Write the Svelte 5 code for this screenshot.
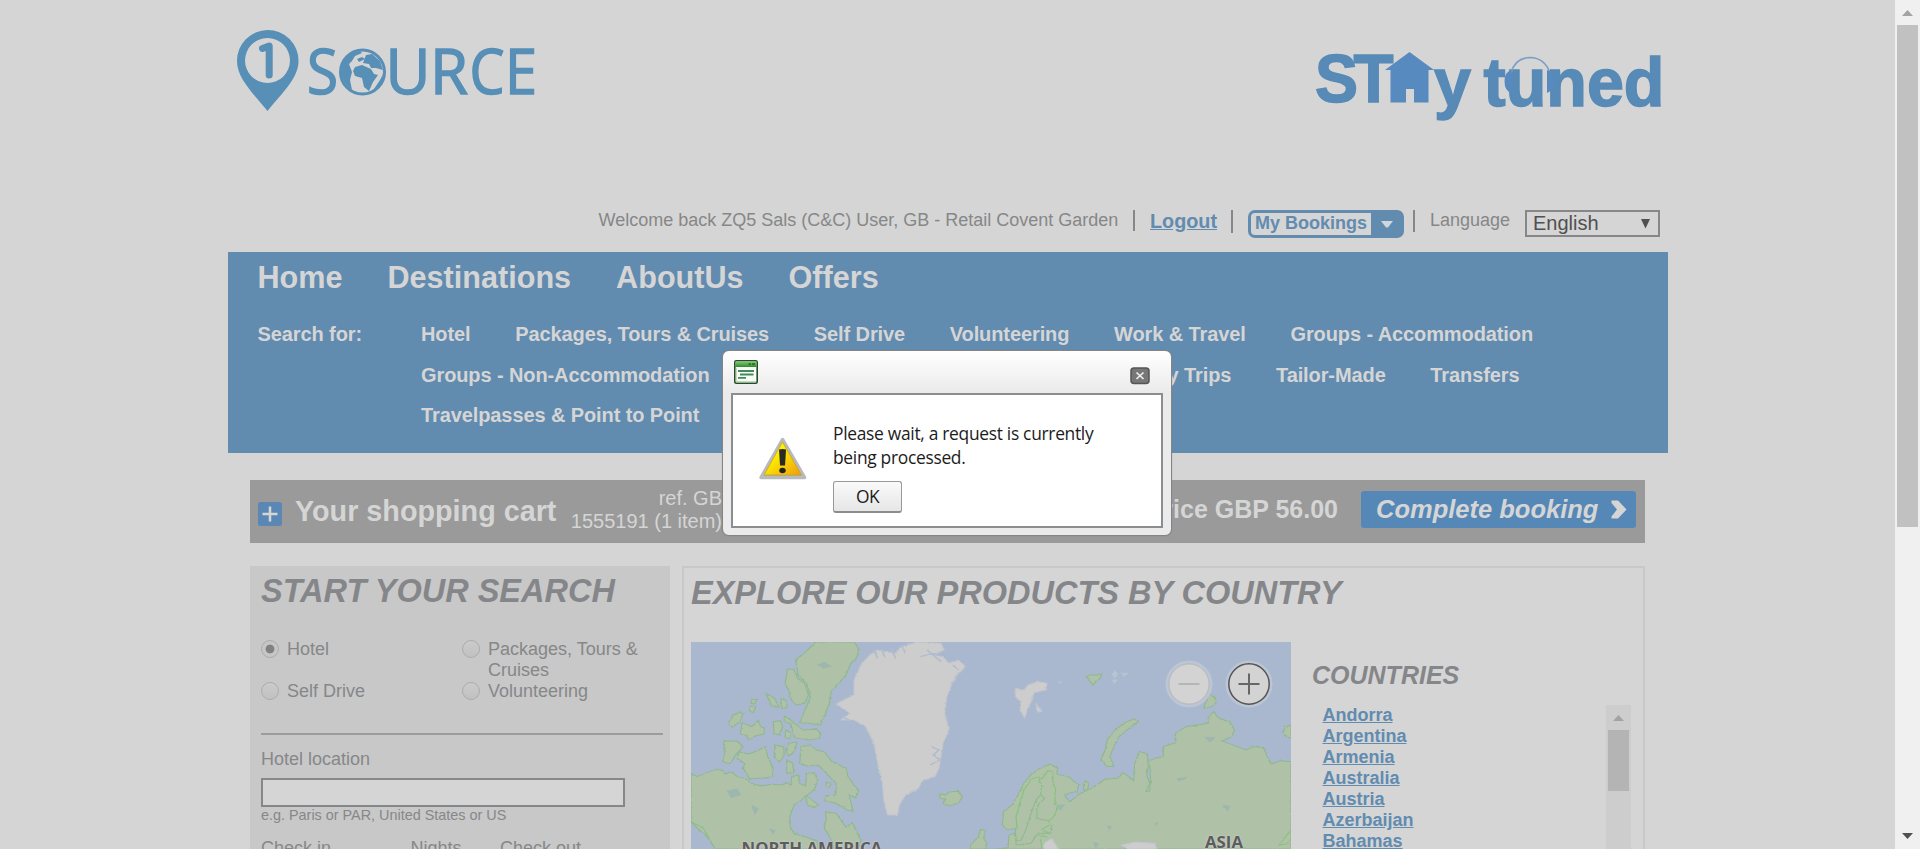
<script>
  const mainNav = ['Home', 'Destinations', 'AboutUs', 'Offers'];
  const searchRow1 = ['Hotel', 'Packages, Tours & Cruises', 'Self Drive', 'Volunteering', 'Work & Travel', 'Groups - Accommodation'];
  const searchRow2 = ['Groups - Non-Accommodation', 'Day Trips', 'Tailor-Made', 'Transfers'];
  const products = ['Hotel', 'Packages, Tours & Cruises', 'Self Drive', 'Volunteering'];
  const countries = ['Andorra', 'Argentina', 'Armenia', 'Australia', 'Austria', 'Azerbaijan', 'Bahamas'];
  let selected = $state('Hotel');

  const land = [
    'M343 276 L440 276 Q460 300 445 325 L432 340 L420 375 L405 395 L382 425 L378 460 L368 490 L355 525 L325 520 L303 518 L312 490 L322 465 L330 440 L320 400 L300 378 L292 330 L310 315 L330 292 Z',
    'M272 358 L288 358 L298 385 L315 400 L325 435 L315 460 L295 465 L282 450 L275 420 L266 400 Z',
    'M218 432 L240 445 L250 472 L232 468 Z',
    'M255 446 L268 452 L272 472 L258 476 Z',
    'M180 450 L193 448 L190 462 L180 460 Z',
    'M178 468 L192 470 L185 488 L176 482 Z',
    'M150 487 L160 490 L152 515 L132 531 L123 520 L135 495 Z',
    'M157 518 L182 530 L198 511 L204 530 L214 534 L212 552 L190 558 L174 570 L168 556 L153 552 Z',
    'M236 515 L253 512 L260 530 L252 555 L238 550 Z',
    'M264 498 L285 515 L310 540 L345 538 L356 550 L352 566 L325 570 L290 563 L280 520 L264 515 Z',
    'M268 540 L280 548 L278 566 L265 562 Z',
    'M112 572 L145 574 L160 590 L140 615 L128 642 L108 635 L114 605 Z',
    'M150 605 L175 612 L200 600 L215 590 L222 620 L236 655 L234 680 L210 684 L176 686 L160 655 L164 640 L145 625 Z',
    'M240 585 L262 590 L264 615 L252 636 L238 620 Z',
    'M275 580 L296 577 L290 605 L275 618 L268 600 Z',
    'M270 630 L285 640 L288 668 L270 670 Z',
    'M306 590 L330 585 L345 600 L365 605 L385 635 L420 655 L425 680 L440 705 L452 722 L445 745 L428 735 L438 785 L420 778 L395 760 L365 752 L370 738 L392 735 L395 700 L370 670 L350 645 L322 648 L303 640 Z',
    'M318 735 L350 765 L340 772 L322 765 Z',
    'M370 697 L382 700 L378 712 L370 710 Z',
    'M28 672 L45 680 L62 670 L95 658 L110 663 L115 672 L130 665 L145 680 L165 685 L180 700 L205 708 L235 703 L260 705 L270 698 L280 705 L283 680 L300 675 L302 700 L318 708 L320 670 L340 668 L348 690 L340 720 L318 738 L308 750 L288 765 L278 800 L278 828 L288 850 L320 862 L345 872 L350 897 L90 897 L70 860 L45 835 L28 815 Z',
    'M368 785 L395 790 L408 812 L420 832 L436 818 L446 845 L458 870 L450 897 L390 897 L385 872 L365 835 L370 805 Z',
    'M657 732 L672 735 L680 726 L705 724 L714 740 L705 758 L683 768 L665 760 L672 748 L657 745 Z',
    'M1028 380 L1040 374 L1050 376 L1066 372 L1062 386 L1052 392 L1045 406 L1038 396 Z',
    'M1150 506 L1158 516 L1130 540 L1108 562 L1097 590 L1087 620 L1097 650 L1078 648 L1065 628 L1075 600 L1080 570 L1100 540 L1125 518 Z',
    'M1338 432 L1350 440 L1356 456 L1345 470 L1324 474 L1330 455 Z',
    'M1545 526 L1530 530 L1526 546 L1535 562 L1545 564 Z',
    'M935 642 L955 655 L952 672 L985 682 L1008 705 L1004 724 L985 730 L972 735 L985 755 L1000 742 L1010 732 L1040 715 L1075 688 L1108 684 L1120 668 L1135 680 L1147 692 L1150 640 L1162 604 L1182 612 L1184 650 L1180 675 L1188 700 L1178 725 L1188 722 L1190 690 L1188 650 L1183 635 L1200 625 L1222 620 L1222 590 L1253 578 L1253 550 L1280 530 L1335 520 L1340 495 L1350 485 L1362 505 L1390 515 L1402 540 L1395 560 L1370 572 L1410 590 L1430 600 L1450 590 L1475 592 L1485 620 L1495 642 L1520 632 L1545 635 L1545 897 L735 897 L735 885 L755 860 L760 838 L772 842 L768 865 L776 880 L772 897 L800 897 L830 893 L832 855 L845 850 L850 870 L862 873 L875 838 L885 800 L900 750 L912 734 L922 745 L905 765 L902 805 L930 812 L940 825 L938 850 L905 850 L888 880 L850 885 L848 835 L828 840 L815 825 L818 785 L840 765 L855 735 L870 700 L890 672 L910 655 Z',
    'M1025 692 L1034 700 L1030 720 L1020 718 Z'
  ];
  const borders = [
    'M852 838 L850 800 L858 765 L870 720 L888 688 L905 680 L915 705 L912 734',
    'M905 680 L915 688 L930 662 L943 664 L942 690 L950 720 L948 755 L955 775 L945 800 L930 815',
    'M935 825 L915 838 L935 850 M905 855 L930 862 M912 868 L915 897 M28 815 L60 835 L75 870',
    'M1545 840 L1515 885 L1545 880'
  ];
</script>

<svelte:head><title>1Source</title></svelte:head>

<div class="window">
  <div class="page">
    <header>
      <svg class="brand" width="304" height="90" viewBox="235 28 304 90" role="img" aria-label="1 Source">
        <path d="M267.5 30 A30.7 30.7 0 0 0 237 61 C237 78 252 92 267.5 111 C283 92 298.5 78 298.5 61 A30.7 30.7 0 0 0 267.5 30Z M267.5 38 A22.5 22.5 0 1 1 267.5 83 A22.5 22.5 0 1 1 267.5 38Z" fill="#578fb6" fill-rule="evenodd" />
        <path d="M262.500 48.500 L269.200 46 V75" fill="none" stroke="#578fb6" stroke-width="7" stroke-linejoin="round" stroke-linecap="round" />
        <g class="source">
          <text x="307" y="93.500" textLength="31" lengthAdjust="spacingAndGlyphs">S</text>
          <text x="385.500" y="93.500" textLength="45" lengthAdjust="spacingAndGlyphs">U</text>
          <text x="430" y="93.500" textLength="38" lengthAdjust="spacingAndGlyphs">R</text>
          <text x="469.500" y="93.500" textLength="35" lengthAdjust="spacingAndGlyphs">C</text>
          <text x="505" y="93.500" textLength="32" lengthAdjust="spacingAndGlyphs">E</text>
        </g>
        <circle cx="362.5" cy="72" r="22" fill="none" stroke="#578fb6" stroke-width="3" />
        <path d="M341 66 Q345 53 359 50 L362 53 L355 56 L352 61 L349 64 L352 72 L350 80 L352 90 Q340 82 341 66Z M357 59 L362 57 L365 59 L359 62Z M366 55 L372 54 L380 61 L383 70 L376 68 L371 68 L369 64 L363 63Z M355 67 L362 65 L371 69 L374 74 L378 75 L373 82 L369 91 L364 87 L362 78 L355 76 L353 71Z M380 80 L383 74 L382 83 L378 88 L372 92Z" fill="#578fb6" />
      </svg>
      <svg class="tuned" width="350" height="75" viewBox="1313 50 350 75" role="img" aria-label="Stay tuned">
        <g class="stay">
          <text x="1315" y="102" textLength="43" lengthAdjust="spacingAndGlyphs">S</text>
          <text x="1353.500" y="102" textLength="40" lengthAdjust="spacingAndGlyphs">T</text>
          <text x="1434" y="106" textLength="37" lengthAdjust="spacingAndGlyphs">y</text>
          <text x="1483.500" y="106" textLength="181" lengthAdjust="spacingAndGlyphs">tuned</text>
        </g>
        <path d="M1409.500 52 L1434 70 H1428.500 V102.500 H1414 V89 H1406 V102.500 H1390.500 V70 H1385Z" fill="#578abf" />
        <path d="M1511 73 Q1515 58 1530 57.500 Q1545 58 1550 73" fill="none" stroke="#7b9fc6" stroke-width="1.600" />
        <path d="M1511.500 70 V93 Q1504.500 91 1504.500 81 Q1504.500 72 1511.500 70Z M1547 70 V93 Q1555 90 1555 81 Q1555 72 1547 70Z" fill="#578abf" />
      </svg>
    </header>

    <div class="userbar">
      <span class="welcome">Welcome back ZQ5 Sals (C&amp;C) User, GB - Retail Covent Garden</span>
      <i class="sep"></i>
      <a class="logout" href="#logout">Logout</a>
      <i class="sep s2"></i>
      <button class="bookings"><span>My Bookings</span>
        <svg width="14" height="9" viewBox="0 0 14 9"><path d="M1 1 H13 L8 7.500 H6Z" fill="#cfd6dc" /></svg>
      </button>
      <i class="sep s3"></i>
      <span class="language">Language</span>
      <div class="select"><span>English</span>
        <svg width="9" height="10" viewBox="0 0 9 10"><path d="M0 0 H9 L4.500 9.500Z" fill="#505050" /></svg>
      </div>
    </div>

    <nav>
      <div class="main-nav">{#each mainNav as item}<a href="#{item}">{item}</a>{/each}</div>
      <div class="sub-nav">
        <span class="for">Search for:</span>
        <div class="rows">
          <div class="row">{#each searchRow1 as item}<a href="#s">{item}</a>{/each}</div>
          <div class="row second">{#each searchRow2 as item}<a href="#s">{item}</a>{/each}</div>
          <div class="row"><a href="#s">Travelpasses &amp; Point to Point</a></div>
        </div>
      </div>
    </nav>

    <section class="cart">
      <svg class="plus" width="24" height="24" viewBox="0 0 24 24"><rect width="24" height="24" rx="2.500" fill="#5a87b3" /><path d="M12 4.500 V19.500 M4.500 12 H19.500" stroke="#d5d5d5" stroke-width="2.500" /></svg>
      <h3>Your shopping cart</h3>
      <p class="ref">ref. GB<br />1555191 (1 item)</p>
      <p class="price">Price GBP 56.00</p>
      <button class="complete"><span>Complete booking</span>
        <svg width="16" height="19" viewBox="0 0 16 19"><path d="M0.500 0.500 H7 L15.500 9.500 L7 18.500 H0.500 V16.500 L6 9.500 L0.500 3Z" fill="#d5d5d5" /></svg>
      </button>
    </section>

    <main>
      <section class="search">
        <h2>START YOUR SEARCH</h2>
        <div class="radios">
          {#each products as p}
            <label><input type="radio" bind:group={selected} value={p} /><i class:on={selected === p}></i><span>{p}</span></label>
          {/each}
        </div>
        <hr />
        <div class="field-label">Hotel location</div>
        <input class="location" type="text" />
        <div class="hint">e.g. Paris or PAR, United States or US</div>
        <div class="dates"><span>Check in</span><span>Nights</span><span>Check out</span></div>
      </section>

      <section class="explore">
        <h2>EXPLORE OUR PRODUCTS BY COUNTRY</h2>
        <div class="cols">
          <div class="map">
            <svg width="600" height="207" viewBox="28 276 1517 621" preserveAspectRatio="none">
              <defs>
                <filter id="rough" x="-5%" y="-5%" width="110%" height="110%">
                  <feTurbulence type="fractalNoise" baseFrequency="0.12" numOctaves="2" seed="4" />
                  <feDisplacementMap in="SourceGraphic" scale="7" xChannelSelector="R" yChannelSelector="G" />
                </filter>
              </defs>
              <rect x="28" y="276" width="1517" height="621" fill="#a9b7cf" />
              <g filter="url(#rough)">
                {#each land as d}<path {d} class="land" />{/each}
                {#each borders as d}<path {d} class="border" />{/each}
                <path class="ice" d="M480 315 L500 300 L545 310 L560 290 L600 276 L660 280 L668 300 L640 315 L665 320 L680 340 L705 330 L722 350 L700 375 L688 400 L675 440 L670 490 L680 540 L665 580 L660 620 L655 655 L645 680 L615 690 L600 718 L570 735 L555 765 L550 795 L525 795 L515 750 L512 700 L500 640 L490 580 L470 530 L440 510 L405 510 L430 490 L395 462 L440 435 L440 390 L460 340Z" />
                <path class="fjord" d="M490 300 L500 325 M510 298 L518 322 M535 295 L545 325 M560 285 L570 310 M608 320 L640 310 L662 318 M625 300 L660 335 M635 590 L655 600 L640 615 L658 630 L632 645 M690 345 L705 360 M410 500 L430 512" />
                <path class="ice" d="M848 415 L870 420 L880 405 L905 395 L928 400 L925 420 L895 428 L890 450 L878 480 L872 505 L860 480 L862 455 L848 440Z M900 460 L915 485 L905 485Z M920 880 L940 866 L958 897 L920 897Z M1118 885 L1150 876 L1200 880 L1205 897 L1130 897Z" />
                <path class="faint" d="M1090 375 L1100 360 L1108 372 L1098 385Z M1115 368 L1136 368 L1122 380Z M1092 390 L1108 388 L1098 402Z M955 392 L966 395 L960 403Z" />
                <g class="lake"><path d="M118 722 L145 715 L155 735 L130 745Z M180 765 L200 775 L190 795Z M225 835 L242 840 L235 855Z M1325 560 L1355 562 L1340 578Z M1255 685 L1285 680 L1265 695Z M1370 765 L1392 768 L1385 785Z M1045 875 L1060 880 L1050 897Z M1080 825 L1092 830 L1085 845Z M950 765 L975 762 L962 782Z M345 345 L365 335 L385 350 L365 355Z M1200 820 L1210 815 L1205 830Z" /></g>
              </g>
            </svg>
            <b class="na">NORTH AMERICA</b>
            <b class="asia">ASIA</b>
            <svg class="zoomers" width="110" height="50" viewBox="0 0 110 50">
              <g fill="none"><circle cx="25" cy="25" r="22" stroke="#bcc5d4" stroke-width="3" /><circle cx="25" cy="25" r="20" fill="#d3d3d3" stroke="#bdbdbd" />
                <circle cx="85" cy="25" r="22" stroke="#bcc5d4" stroke-width="3" /><circle cx="85" cy="25" r="20.200" fill="#d3d3d3" stroke="#555" stroke-width="1.500" />
                <path d="M14.500 25 H35.500" stroke="#b5b5b5" stroke-width="2" /><path d="M74.500 25 H95.500 M85 14.500 V35.500" stroke="#666" stroke-width="2" /></g>
            </svg>
          </div>
          <div class="countries">
            <h4>COUNTRIES</h4>
            <div class="list-wrap">
              <ul>{#each countries as c}<li><a href="#{c}">{c}</a></li>{/each}</ul>
              <div class="mini-scroll"><i class="up"></i><i class="thumb"></i></div>
            </div>
          </div>
        </div>
      </section>
    </main>
  </div>

  <div class="scrollbar"><i class="up"></i><i class="thumb"></i><i class="down"></i></div>

  <div class="dialog" role="dialog">
    <div class="titlebar">
      <svg width="24" height="24" viewBox="0 0 24 24"><defs><linearGradient id="gt" x2="0" y2="1"><stop stop-color="#82c873" /><stop offset="1" stop-color="#2c8d29" /></linearGradient></defs>
        <rect x=".8" y=".8" width="22.400" height="22.400" rx="1.500" fill="#fafcfa" stroke="#234c27" stroke-width="1.600" /><rect x="1.500" y="1.500" width="21" height="5.500" fill="url(#gt)" /><path d="M14.500 4 H17 M18 4 H21" stroke="#1f6a20" stroke-width="1.500" /><path d="M4 11 H20 M6 14.500 H19.500 M4 17.800 H12" stroke="#438b57" stroke-width="1.800" /><path d="M2.200 8 V21.800 H22" stroke="#a7cfa2" fill="none" /></svg>
      <svg class="close" width="20" height="18" viewBox="0 0 20 18"><rect x="1" y="1" width="18" height="15.500" rx="3" fill="#777" stroke="#555" stroke-width="1.500" /><path d="M6.500 5.500 L13.500 12 M13.500 5.500 L6.500 12" stroke="#eee" stroke-width="1.700" /></svg>
    </div>
    <div class="body">
      <svg width="48" height="43" viewBox="0 0 48 43"><defs><linearGradient id="wy" x2="1" y2="1"><stop offset=".35" stop-color="#fdf000" /><stop offset="1" stop-color="#f09a10" /></linearGradient></defs>
        <path d="M23.500 2.500 L45.500 40.500 H2Z" fill="#aaa" stroke="#b9babd" stroke-width="3.500" stroke-linejoin="round" /><path d="M23.500 5 L42.500 38 H5Z" fill="url(#wy)" stroke="#c8a418" stroke-width=".8" /><path d="M20 12.500 Q23.500 11.500 27 12.500 L26 28.500 H21Z" fill="#292a22" /><ellipse cx="23.500" cy="33.500" rx="3.200" ry="2.700" fill="#222" /></svg>
      <div class="msg"><p>Please wait, a request is currently<br />being processed.</p><button>OK</button></div>
    </div>
  </div>
</div>

<style>
  :global(body) { background: #d5d5d5; overflow: hidden; }
  * { box-sizing: border-box; }
  h2, h3, h4, p, ul { margin: 0; padding: 0; }
  a { color: inherit; text-decoration: none; }
  i { display: block; }
  button { border: 0; padding: 0; margin: 0; font-family: inherit; }
  svg { display: block; flex: none; }
  .window { display: flex; width: 1920px; height: 849px; overflow: hidden; position: relative; background: #d5d5d5; font-family: "Liberation Sans", Arial, sans-serif; font-size: 18px; color: #868788; }
  .page { flex: 1; min-width: 0; padding-left: 228px; white-space: nowrap; }
  header { height: 210px; width: 1440px; display: flex; justify-content: space-between; padding: 28px 5px 0 7px; }
  .brand, .tuned { overflow: visible; }
  .source { font: 500 62px "Open Sans", sans-serif; fill: #578fb6; stroke: #578fb6; stroke-width: 1.5; }
  .tuned { margin-top: 22px; }
  .stay { font: bold 68px "Liberation Sans", Arial, sans-serif; fill: #578ab6; stroke: #578ab6; stroke-width: 1.5; }

  .userbar { height: 42px; display: flex; align-items: flex-start; padding-left: 370.5px; line-height: 20px; }
  .welcome { width: 534.5px; }
  .sep { width: 2px; height: 21px; background: #868788; }
  .s2 { height: 23px; }
  .s3 { height: 22px; margin-left: 9px; }
  .logout { width: 81px; margin-left: 15px; padding-top: 1px; font-size: 19.8px; font-weight: bold; color: #628bb0; text-decoration: underline; }
  .bookings { display: flex; align-items: center; width: 156px; height: 28px; margin-left: 15px; padding: 3px; border-radius: 7px; background: #628bb0; color: #628bb0; font-size: 18px; font-weight: bold; }
  .bookings span { width: 120px; height: 22px; padding-left: 4px; line-height: 20px; text-align: left; background: #d5d5d5; border-radius: 4px 0 0 4px; }
  .bookings svg { margin-left: 9px; }
  .language { width: 95px; margin-left: 15px; }
  .select { width: 135px; height: 27px; border: 2px solid #868788; color: #505050; font-size: 20px; line-height: 23px; display: flex; align-items: center; justify-content: space-between; padding: 0 8px 0 6px; }

  nav { width: 1440px; height: 201px; background: #628bb0; color: #d5d5d5; font-weight: bold; padding: 7px 0 0 29.5px; }
  .main-nav { display: flex; gap: 45px; height: 55px; font-size: 30.6px; line-height: 36px; }
  .sub-nav { display: flex; font-size: 20px; line-height: 40.5px; letter-spacing: -0.1px; }
  .for { width: 163.5px; }
  .row { display: flex; gap: 44.7px; }
  .second { width: 1098.5px; }
  .second a:nth-child(2) { margin-left: auto; }

  .cart { display: flex; align-items: flex-start; width: 1395px; height: 63px; margin: 27px 0 0 22px; background: #9a9a9a; color: #d5d5d5; padding-left: 8px; }
  .cart > * { flex: none; }
  .plus { margin-top: 22px; }
  h3 { margin-left: 13px; width: 267px; font-size: 28.75px; line-height: 36px; padding-top: 13px; }
  .ref { width: 160px; margin-top: 7px; font-size: 20px; line-height: 23px; text-align: right; }
  .price { width: 616px; margin-top: 14px; text-align: right; font-size: 25px; line-height: 30px; font-weight: bold; }
  .complete { display: flex; align-items: center; justify-content: space-between; width: 275px; height: 37px; margin: 11px 0 0 23px; padding: 0 9px 0 15px; border-radius: 3px; background: #5588b7; color: #d5d5d5; font-size: 25.5px; font-style: italic; font-weight: bold; }

  main { display: flex; gap: 12px; margin: 23px 0 0 22px; }
  h2 { font-size: 32.5px; line-height: 38px; font-style: italic; color: #85868a; }
  .search { width: 420px; height: 320px; background: #c8c8c8; padding: 6px 7px 0 11px; }
  .radios { display: grid; grid-template-columns: 201px 200px; grid-template-rows: 42px 42px; margin-top: 29px; line-height: 21px; }
  .radios label { display: flex; white-space: normal; }
  .radios input { display: none; }
  .radios i { flex: none; width: 18px; height: 18px; margin: 1px 8px 0 0; border: 1px solid #acacac; border-radius: 50%; background: linear-gradient(#cbcbcb, #c1c1c1); }
  .radios i.on { background: radial-gradient(circle, #818181 4px, #c6c6c6 4.8px); }
  .radios label:nth-child(even) span { width: 150px; }
  hr { border: 0; height: 2px; background: #9c9c9c; margin: 10px 0 0; }
  .field-label { margin-top: 14px; line-height: 21px; }
  .location { display: block; width: 364px; height: 29px; margin-top: 8px; border: 2px solid #868788; background: #d5d5d5; padding: 0; }
  .hint { font-size: 14.4px; line-height: 16px; }
  .dates { display: grid; grid-template-columns: 149.5px 89.5px 1fr; margin-top: 15px; line-height: 21px; }

  .explore { width: 963px; height: 320px; border: 2px solid #c8c8c8; padding: 6px 12px 0 7px; }
  .cols { display: flex; margin-top: 30px; }
  .map { width: 600px; height: 207px; position: relative; overflow: hidden; }
  .land { fill: #afc2a8; stroke: #8fb98d; stroke-width: 3; }
  .border { fill: none; stroke: #87c27c; stroke-width: 3; }
  .ice { fill: #cecdcd; stroke: #c0c5cd; stroke-width: 3; }
  .fjord { fill: none; stroke: #b0bbcf; stroke-width: 4; }
  .faint { fill: #b9c3d2; }
  .lake { fill: #9eb7ae; }
  .map b { position: absolute; font: 700 16.8px/20px "Open Sans", sans-serif; color: #5c5c5c; text-shadow: 0 0 2px #ccc, 0 0 2px #ccc; }
  .na { left: 50.5px; top: 196px; }
  .asia { left: 514px; top: 190px; }
  .zoomers { position: absolute; left: 473px; top: 17px; }
  .countries { flex: 1; padding: 18px 0 0 21px; }
  h4 { margin: 0; font-size: 25px; line-height: 30px; font-style: italic; color: #85868a; }
  .list-wrap { display: flex; justify-content: space-between; margin-top: 15px; padding-left: 10.5px; }
  ul { list-style: none; font-weight: bold; color: #628bb0; line-height: 21px; }
  ul a { text-decoration: underline; }
  .mini-scroll { width: 25px; height: 160px; background: #cdcdcd; padding: 10px 2px 0; }
  .up { width: 11px; height: 6px; margin: 0 auto; background: #a3a3a3; clip-path: polygon(50% 0, 100% 100%, 0 100%); }
  .mini-scroll .thumb { height: 61px; margin-top: 9px; background: #b4b4b4; }

  .scrollbar { width: 25px; background: #f0f0f0; padding: 10px 2px 0; }
  .scrollbar .thumb { height: 502px; margin-top: 9px; background: #c1c1c1; }
  .down { width: 11px; height: 6px; margin: 306px auto 0; background: #505050; clip-path: polygon(0 0, 100% 0, 50% 100%); }

  .dialog { position: absolute; left: 722px; top: 350px; width: 450px; height: 186px; border: 1px solid #858585; border-radius: 7px; background: linear-gradient(#fff, #ebebeb 40px, #ebebeb); padding: 0 8px; box-shadow: 0 0 1px #777; }
  .titlebar { display: flex; justify-content: space-between; height: 42px; padding: 9px 13px 0 3px; }
  .close { margin-top: 7px; }
  .body { display: flex; height: 135px; width: 432px; background: #fff; border: 2px solid #8a8e90; padding: 42px 0 0 26px; font-family: "Open Sans", "Noto Sans", sans-serif; color: #1c1c1c; }
  .msg { margin-left: 26px; margin-top: -16px; }
  .msg p { font-size: 17.4px; line-height: 24px; letter-spacing: -0.3px; white-space: nowrap; }
  .msg button { display: block; width: 69px; height: 32px; margin-top: 12px; padding-bottom: 1px; border: 1px solid #999; border-bottom: 2px solid #8c8c8c; border-radius: 3px; background: linear-gradient(#fafafa, #e6e6e6); font-size: 17.4px; letter-spacing: -0.5px; color: #1c1c1c; }
</style>
